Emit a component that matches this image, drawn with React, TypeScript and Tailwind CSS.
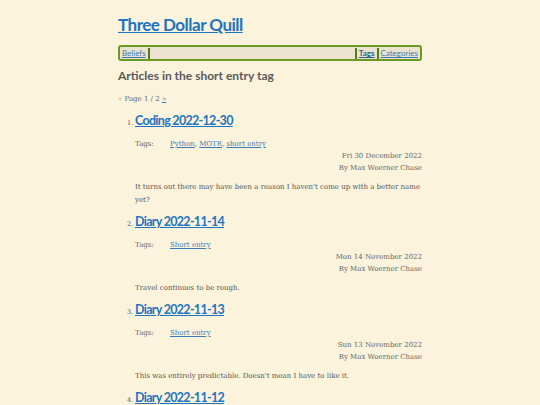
import React from 'react';

const posts = [
  {
    title: 'Coding 2022-12-30',
    tags: ['Python', 'MOTR', 'short entry'],
    date: 'Fri 30 December 2022',
    summary: "It turns out there may have been a reason I haven't come up with a better name yet?",
  },
  {
    title: 'Diary 2022-11-14',
    tags: ['Short entry'],
    date: 'Mon 14 November 2022',
    summary: 'Travel continues to be rough.',
  },
  {
    title: 'Diary 2022-11-13',
    tags: ['Short entry'],
    date: 'Sun 13 November 2022',
    summary: "This was entirely predictable. Doesn't mean I have to like it.",
  },
  {
    title: 'Diary 2022-11-12',
    tags: ['Short entry'],
    date: 'Sat 12 November 2022',
    summary: 'More of the same.',
  },
];

const heading = "font-['Lato','Roboto',sans-serif]";
const body = "font-['DejaVu_Serif','Liberation_Serif',serif]";

export default function App() {
  return (
    <div className="h-[405px] overflow-hidden bg-[#fbf3dc] text-[#555]">
      <div className="mx-auto w-[304px] pt-[13px]">
        <h1 className={`${heading} h-[24px] text-[17px] leading-[24px] font-bold tracking-[-0.5px]`}>
          <a href="#" className="text-[#1f74c0] underline">Three Dollar Quill</a>
        </h1>

        {/* Top navigation */}
        <nav className={`${heading} mt-[8px] flex h-[16px] items-center rounded-[3px] border-2 border-[#6b9a20] bg-[#ebe3cf] px-[2px] text-[8px] leading-[12px]`}>
          <a href="#" className="text-[#3b7ab5] underline">Beliefs</a>
          <span className="ml-[2px] h-[11px] w-[2px] bg-[#4f7f14]" />
          <div className="flex-1" />
          <span className="mr-[2px] h-[11px] w-[2px] bg-[#4f7f14]" />
          <a href="#" className="font-bold text-[#2a5e8f] underline">Tags</a>
          <span className="mx-[2px] h-[11px] w-[2px] bg-[#4f7f14]" />
          <a href="#" className="text-[#3b7ab5] underline">Categories</a>
        </nav>

        <h2 className={`${heading} mt-[6px] h-[18px] text-[12px] leading-[18px] font-bold text-[#5a5a5a]`}>
          Articles in the short entry tag
        </h2>

        <p className={`${body} mt-[8px] h-[12px] text-[7px] leading-[12px] text-[#666]`}>
          <span className="text-[#999]">«</span> Page 1 / 2{' '}
          <a href="#" className="text-[#3b7ab5] underline">»</a>
        </p>

        <ol className="mt-[7px] pl-[17px]">
          {posts.map((post, i) => (
            <li key={post.title} className="relative mb-[6px]">
              <span className={`${body} absolute left-[-8px] top-[6px] text-[6.5px] leading-[10px] text-[#555]`}>
                {i + 1}.
              </span>
              <h3 className={`${heading} h-[18px] text-[12.5px] leading-[18px] font-bold tracking-[-0.7px]`}>
                <a href="#" className="text-[#1f74c0] underline">{post.title}</a>
              </h3>
              <div className={`${body} mt-[8px] flex h-[12px] text-[7px] leading-[12px]`}>
                <span className="w-[35px] text-[#666]">Tags:</span>
                <span>
                  {post.tags.map((tag, j) => (
                    <React.Fragment key={tag}>
                      <a href="#" className="text-[#3b7ab5] underline">{tag}</a>
                      {j < post.tags.length - 1 && ', '}
                    </React.Fragment>
                  ))}
                </span>
              </div>
              <div className={`${body} text-right text-[7px] leading-[12px] text-[#666]`}>
                <div>{post.date}</div>
                <div>By Max Woerner Chase</div>
              </div>
              <p className={`${body} mt-[7px] text-[7px] leading-[13px] text-[#555]`}>{post.summary}</p>
            </li>
          ))}
        </ol>
      </div>
    </div>
  );
}
